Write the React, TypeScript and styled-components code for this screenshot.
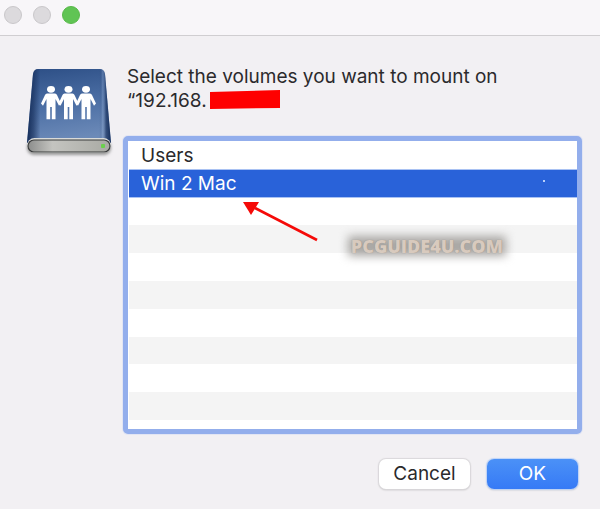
import React, { useState } from "react";
import styled, { createGlobalStyle } from "styled-components";

const GlobalStyle = createGlobalStyle`
  * { box-sizing: border-box; }
  html, body, #root { height: 100%; }
  body {
    margin: 0;
    background: #f2f0f3;
    color: #2b2a2c;
    font-family: Inter, "Liberation Sans", sans-serif;
    font-size: 19px;
    line-height: 24px;
  }
`;

const Dialog = styled.main`
  min-height: 100%;
  display: flex;
  flex-direction: column;
`;

const TitleBar = styled.header`
  display: flex;
  gap: 11px;
  height: 36px;
  padding: 6px 4px;
  background: #f8f6f9;
  border-bottom: 1px solid #d0ced1;
`;

const WindowButton = styled.button<{ $active?: boolean }>`
  width: 18px;
  height: 18px;
  padding: 0;
  border-radius: 50%;
  border: 1px solid ${(p) => (p.$active ? "#58b94a" : "#c9c7ca")};
  background: ${(p) => (p.$active ? "#60c454" : "#dcdadd")};
`;

const Content = styled.div`
  display: grid;
  grid-template-columns: 86px 1fr;
  column-gap: 14px;
  padding: 29px 18px 0 23px;
`;

const DriveIcon = styled.svg`
  display: block;
  margin-top: 1px;
  width: 92px;
  height: 92px;
`;

const Heading = styled.h1`
  margin: 0 0 23px 4px;
  font: inherit;
`;

const Address = styled.span`
  display: flex;
`;

const Redaction = styled.svg`
  margin-left: 3px;
  width: 71px;
  height: 20px;
`;

const VolumePanel = styled.section`
  position: relative;
  border: 5px solid #93aeec;
  border-radius: 5px;
  background: #fff;
  box-shadow: 0 0 0 1px #e2e5f3;
  padding: 1px 0 0 1px;
`;

const VolumeList = styled.ul`
  list-style: none;
  margin: 0;
  padding: 0;
  display: grid;
  grid-template-rows: repeat(10, 1fr) 9px;
  height: 287px;
`;

const VolumeItem = styled.li`
  display: flex;
  &:nth-child(even) { background: #f4f4f4; }
`;

const VolumeButton = styled.button<{ $selected: boolean }>`
  flex: 1;
  border: 0;
  padding: 0 12px;
  font: inherit;
  text-align: left;
  color: ${(p) => (p.$selected ? "#fff" : "inherit")};
  background: ${(p) => (p.$selected ? "#2962d9" : "transparent")};
  box-shadow: ${(p) => (p.$selected ? "0 -1px 0 #a9c2f3, inset 0 -1px 0 #a9c2f3" : "none")};
`;

const Arrow = styled.svg`
  position: absolute;
  left: 112px;
  top: 58px;
  width: 82px;
  height: 46px;
  pointer-events: none;
`;

const Speck = styled.span`
  position: absolute;
  right: 32px;
  top: 39px;
  width: 2px;
  height: 2px;
  background: #b9d0fa;
`;

const Watermark = styled.span`
  position: absolute;
  right: 74px;
  top: 95px;
  font: 800 18px/20px "Open Sans", sans-serif;
  color: #d8cabe;
  text-shadow: 0 0 1px #958b82;
  isolation: isolate;
  &::before {
    content: "";
    position: absolute;
    z-index: -1;
    inset: 0 -3px 0 -3px;
    background: #a9a7a4;
    filter: blur(5px);
  }
`;

const Actions = styled.footer`
  display: flex;
  justify-content: flex-end;
  gap: 17px;
  padding: 25px 22px 20px;
`;

const ActionButton = styled.button<{ $primary?: boolean }>`
  width: 91px;
  height: 30px;
  padding: 0;
  border: 0;
  border-radius: 7px;
  font: inherit;
  color: ${(p) => (p.$primary ? "#fff" : "inherit")};
  background: ${(p) => (p.$primary ? "linear-gradient(#4b91f7, #367af6)" : "#fff")};
  box-shadow: 0 0 1px 1px ${(p) => (p.$primary ? "#bdd3f8" : "#dad8db")}, 0 1px 2px #bbb;
`;

const volumes = ["Users", "Win 2 Mac"];
const rows = Array.from({ length: 11 }, (_, i) => volumes[i]);

function Person({ x }: { x: number }) {
  return (
    <g transform={`translate(${x} 0)`}>
      <ellipse cx="0" cy="23.3" rx="4" ry="3.4" />
      <path d="M-4 27.5H4Q5.4 27.5 6 29L10 37.5L8 39.8L4.5 33V53.3H0.8V41H-0.8V53.3H-4.5V33L-8 39.8L-10 37.5L-6 29Q-5.4 27.5 -4 27.5Z" />
    </g>
  );
}

function SharedDrive() {
  return (
    <DriveIcon viewBox="0 0 92 92" role="img" aria-label="Shared network drive">
      <defs>
        <linearGradient id="lid" x1="0" y1="0" x2="0.15" y2="1">
          <stop offset="0" stopColor="#2d4f86" />
          <stop offset="0.5" stopColor="#4a6da3" />
          <stop offset="1" stopColor="#6c8ab8" />
        </linearGradient>
        <linearGradient id="sides">
          <stop offset="0" stopColor="#142c58" />
          <stop offset="0.08" stopColor="#142c58" stopOpacity="0.6" />
          <stop offset="0.16" stopColor="#142c58" stopOpacity="0" />
          <stop offset="0.86" stopColor="#142c58" stopOpacity="0" />
          <stop offset="0.9" stopColor="#9fb5d8" stopOpacity="0.3" />
          <stop offset="0.94" stopColor="#142c58" stopOpacity="0.6" />
          <stop offset="1" stopColor="#142c58" />
        </linearGradient>
        <linearGradient id="metal">
          <stop offset="0" stopColor="#8c8d8c" />
          <stop offset="0.3" stopColor="#c4c4c0" />
          <stop offset="1" stopColor="#a9aaa4" />
        </linearGradient>
        <filter id="soft" x="-20%" y="-50%" width="140%" height="200%">
          <feGaussianBlur stdDeviation="1.5" />
        </filter>
      </defs>
      <rect x="4" y="74" width="84" height="15" rx="7" fill="#999" filter="url(#soft)" />
      <path d="M15 3H77Q81 3 82 8L88 77H4L10 8Q11 3 15 3Z" fill="url(#lid)" />
      <path d="M15 3H77Q81 3 82 8L88 77H4L10 8Q11 3 15 3Z" fill="url(#sides)" />
      <rect x="4" y="72" width="84" height="15" rx="7.5" fill="#d9dad8" />
      <rect x="5" y="74" width="82" height="12" rx="6" fill="url(#metal)" stroke="#3a3c3d" strokeWidth="1.2" />
      <rect x="78" y="78" width="4" height="4" rx="1" fill="#6bd04d" />
      <g fill="#fff">
        <Person x={28} />
        <Person x={45.5} />
        <Person x={63} />
      </g>
    </DriveIcon>
  );
}

export default function App() {
  const [selected, setSelected] = useState("Win 2 Mac");
  return (
    <>
      <GlobalStyle />
      <Dialog>
        <TitleBar>
          <WindowButton aria-label="Close" />
          <WindowButton aria-label="Minimize" />
          <WindowButton aria-label="Zoom" $active />
        </TitleBar>
        <Content>
          <SharedDrive />
          <div>
            <Heading>
              Select the volumes you want to mount on
              <Address>
                “192.168.
                <Redaction viewBox="0 0 71 20" aria-hidden="true">
                  <path d="M0 3L70 1V19L0 20Z" fill="#fe0000" />
                </Redaction>
              </Address>
            </Heading>
            <VolumePanel aria-label="Volumes">
              <VolumeList>
                {rows.map((name, i) => (
                  <VolumeItem key={i}>
                    {name && (
                      <VolumeButton
                        $selected={name === selected}
                        aria-pressed={name === selected}
                        onClick={() => setSelected(name)}
                      >
                        {name}
                      </VolumeButton>
                    )}
                  </VolumeItem>
                ))}
              </VolumeList>
              <Speck />
              <Arrow viewBox="0 0 82 46" aria-hidden="true">
                <path d="M15 9L77 41" stroke="#f50a08" strokeWidth="2.6" />
                <path d="M3 3L19 3L11 16Z" fill="#f50a08" />
              </Arrow>
              <Watermark>PCGUIDE4U.COM</Watermark>
            </VolumePanel>
          </div>
        </Content>
        <Actions>
          <ActionButton>Cancel</ActionButton>
          <ActionButton $primary>OK</ActionButton>
        </Actions>
      </Dialog>
    </>
  );
}
